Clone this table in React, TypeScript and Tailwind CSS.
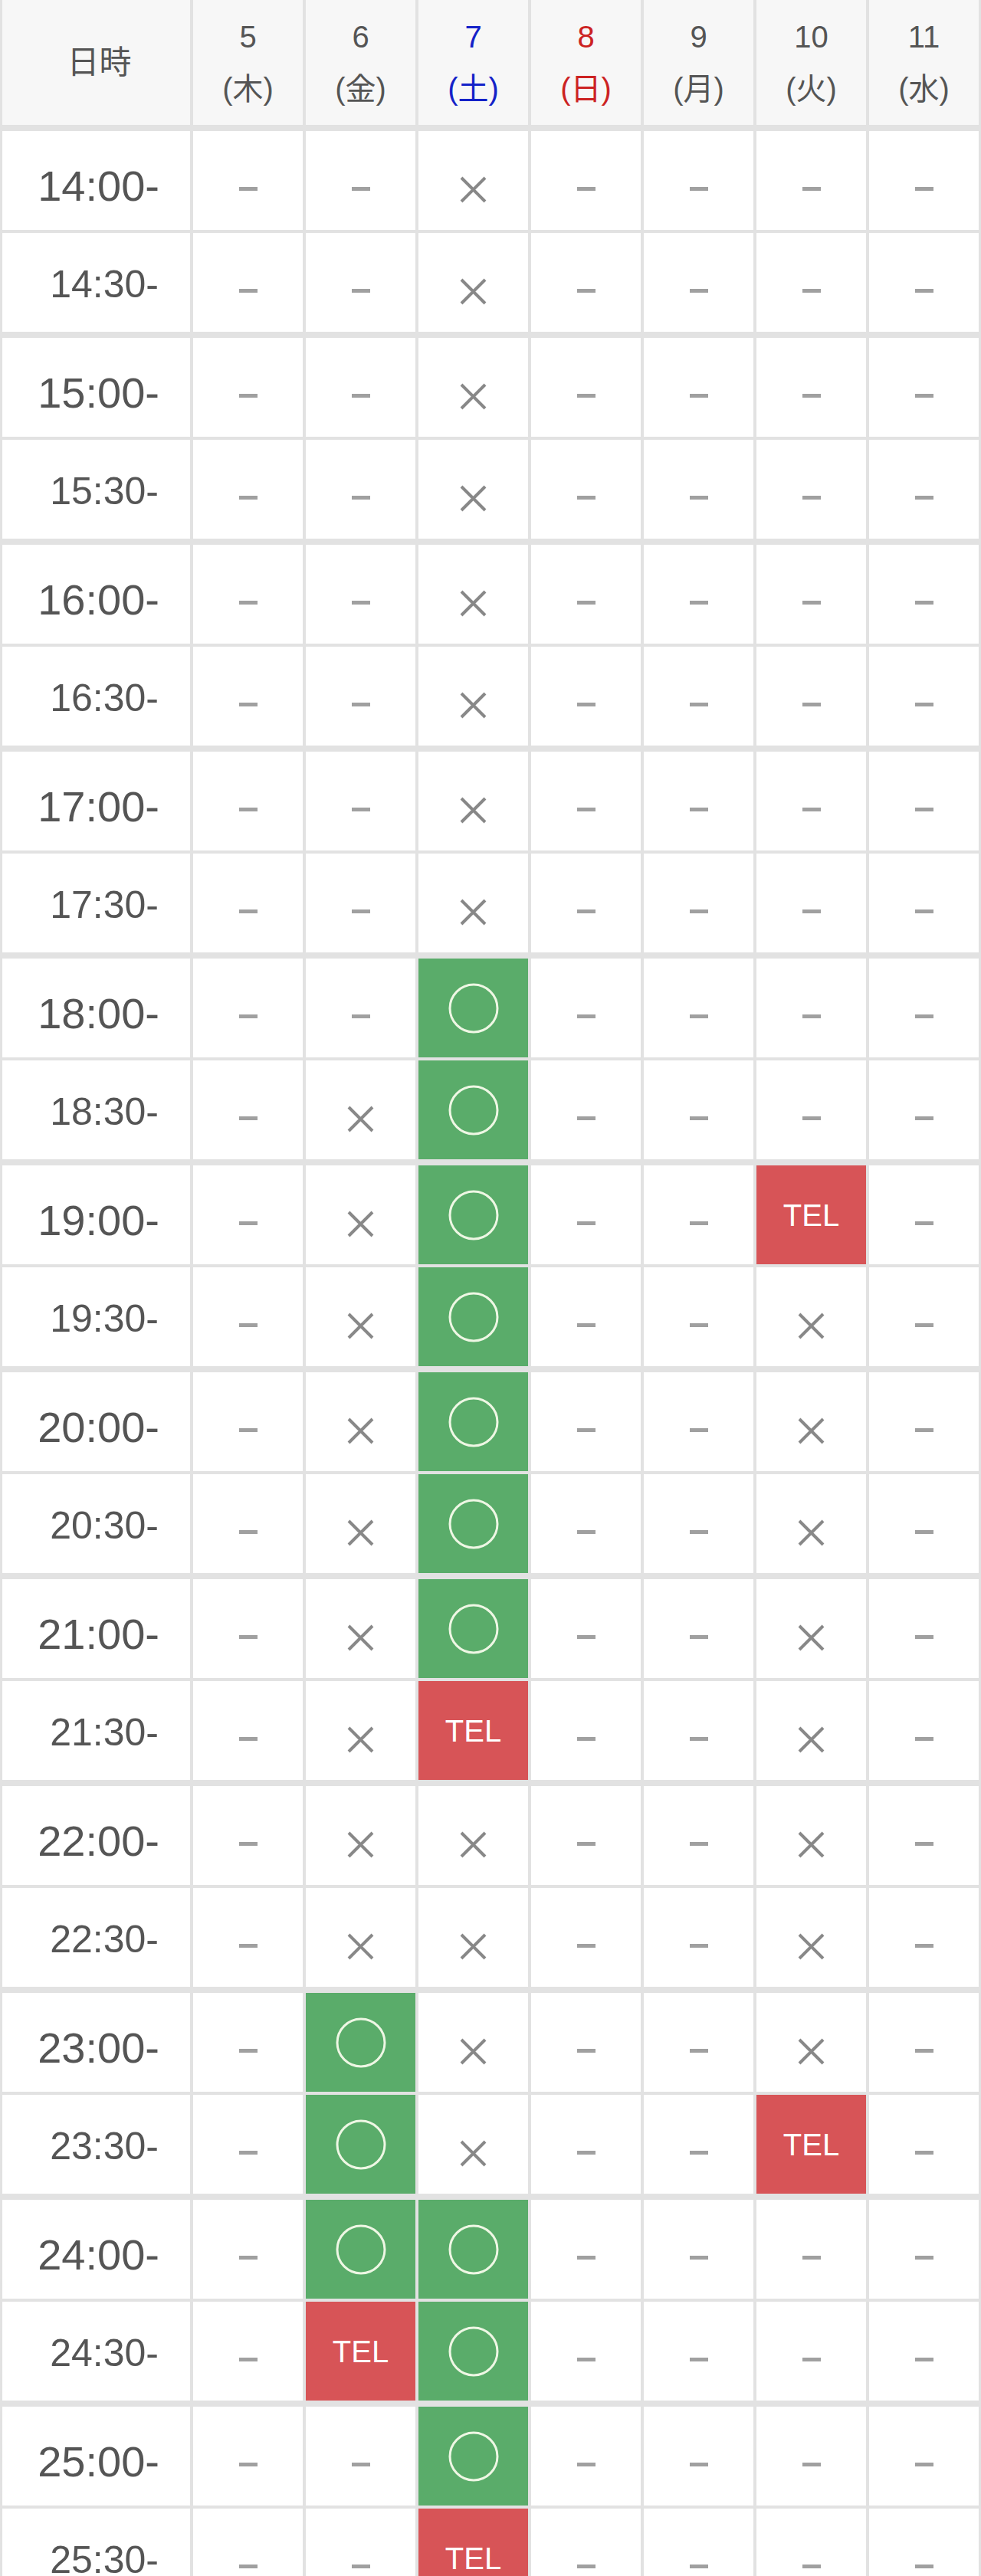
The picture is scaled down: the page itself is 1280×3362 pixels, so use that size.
const days = [
  { d: '5', w: '木', color: 'text-[#555555]' },
  { d: '6', w: '金', color: 'text-[#555555]' },
  { d: '7', w: '土', color: 'text-[#1422c8]' },
  { d: '8', w: '日', color: 'text-[#cc2222]' },
  { d: '9', w: '月', color: 'text-[#555555]' },
  { d: '10', w: '火', color: 'text-[#555555]' },
  { d: '11', w: '水', color: 'text-[#555555]' },
]

// - closed, x full, o open, T call
const rows: [string, string][] = [
  ['14:00', '--x----'],
  ['14:30', '--x----'],
  ['15:00', '--x----'],
  ['15:30', '--x----'],
  ['16:00', '--x----'],
  ['16:30', '--x----'],
  ['17:00', '--x----'],
  ['17:30', '--x----'],
  ['18:00', '--o----'],
  ['18:30', '-xo----'],
  ['19:00', '-xo--T-'],
  ['19:30', '-xo--x-'],
  ['20:00', '-xo--x-'],
  ['20:30', '-xo--x-'],
  ['21:00', '-xo--x-'],
  ['21:30', '-xT--x-'],
  ['22:00', '-xx--x-'],
  ['22:30', '-xx--x-'],
  ['23:00', '-ox--x-'],
  ['23:30', '-ox--T-'],
  ['24:00', '-oo----'],
  ['24:30', '-To----'],
  ['25:00', '--o----'],
  ['25:30', '--T----'],
]

const font = { fontFamily: '"Liberation Sans", "Noto Sans CJK JP", sans-serif' }

function Cell({ s }: { s: string }) {
  if (s === 'o') {
    return (
      <div className="w-[147px] shrink-0 border-l-4 border-[#e2e2e2] bg-[#5aac6a] flex items-center justify-center">
        <svg width="66" height="66" viewBox="0 0 66 66">
          <circle cx="33" cy="33" r="31" fill="none" stroke="#eef7e4" strokeWidth="3" />
        </svg>
      </div>
    )
  }
  if (s === 'T') {
    return (
      <div className="w-[147px] shrink-0 border-l-4 border-[#e2e2e2] bg-[#d75457] flex items-center justify-center text-[40px] text-white">
        TEL
      </div>
    )
  }
  if (s === 'x') {
    return (
      <div className="w-[147px] shrink-0 border-l-4 border-[#e2e2e2] bg-white flex items-center justify-center pt-[23px]">
        <svg width="35" height="35" viewBox="0 0 35 35">
          <path d="M2 2 L33 33 M33 2 L2 33" stroke="#888888" strokeWidth="4" />
        </svg>
      </div>
    )
  }
  return (
    <div className="w-[147px] shrink-0 border-l-4 border-[#e2e2e2] bg-white flex items-center justify-center pt-[21px]">
      <div className="w-[24px] h-[5px] bg-[#a0a0a0]" />
    </div>
  )
}

export default function App() {
  return (
    <div className="w-[1280px] h-[3362px] overflow-hidden bg-white" style={font}>
      <div className="border-l-[3px] border-r-[3px] border-[#e2e2e2]">
        {/* Header */}
        <div className="flex h-[171px] border-b-8 border-[#e2e2e2] bg-[#f7f7f7]">
          <div className="w-[245px] shrink-0 flex items-center justify-center text-[42px] text-[#555555] pl-[8px]">
            日時
          </div>
          {days.map((d) => (
            <div
              key={d.d}
              className={`w-[147px] shrink-0 border-l-4 border-[#e2e2e2] flex flex-col items-center justify-center text-[40px] leading-[68px] ${d.color}`}
            >
              <span>{d.d}</span>
              <span>({d.w})</span>
            </div>
          ))}
        </div>

        {/* Rows */}
        {rows.map(([t, p]) => {
          const hour = t.endsWith(':00')
          return (
            <div
              key={t}
              className={
                hour
                  ? 'flex h-[133px] border-b-4 border-[#e2e2e2]'
                  : 'flex h-[137px] border-b-8 border-[#e2e2e2]'
              }
            >
              <div
                className={
                  hour
                    ? 'w-[245px] shrink-0 flex items-center justify-end pr-[40px] pt-[15px] text-[56px] text-[#555555]'
                    : 'w-[245px] shrink-0 flex items-center justify-end pr-[41px] pt-[6px] text-[50px] text-[#555555]'
                }
              >
                {t}-
              </div>
              {p.split('').map((s, i) => (
                <Cell key={i} s={s} />
              ))}
            </div>
          )
        })}
      </div>
    </div>
  )
}
